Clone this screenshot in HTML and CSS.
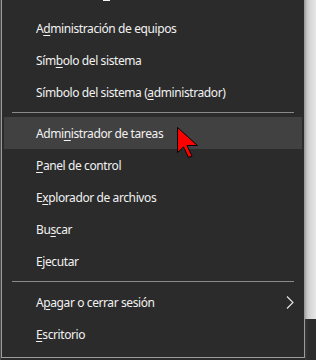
FILE: index.html
```html
<!DOCTYPE html>
<html lang="es">
<head>
<meta charset="utf-8">
<title>Menú Win+X</title>
<link rel="stylesheet" href="styles.css">
</head>
<body>
<div class="screen">
  <div class="gutter"></div>
  <nav class="menu">
    <div class="item stub"><span class="mark"></span></div>
    <div class="item">A<u>d</u>ministración de equipos</div>
    <div class="item">Sím<u>b</u>olo del sistema</div>
    <div class="item">Símbolo del sistema (<u>a</u>dministrador)</div>
    <div class="sep"></div>
    <div class="item active">Admi<u>n</u>istrador de tareas</div>
    <div class="item"><u>P</u>anel de control</div>
    <div class="item">E<u>x</u>plorador de archivos</div>
    <div class="item">Bu<u>s</u>car</div>
    <div class="item">E<u>j</u>ecutar</div>
    <div class="sep"></div>
    <div class="item">A<u>p</u>agar o cerrar sesión
      <svg class="chev" width="8" height="13" viewBox="0 0 8 13"><polyline points="1,0.5 7,6.5 1,12.5" fill="none" stroke="#e8e8e8" stroke-width="1.1"/></svg>
    </div>
    <div class="item"><u>E</u>scritorio</div>
  </nav>
  <div class="edge">
    <div class="edge-top"></div>
    <div class="edge-bottom"></div>
  </div>
</div>
<svg class="cursor" width="24" height="34" viewBox="0 0 24 34">
  <polygon points="0.5,0.5 0.5,25.5 6.5,20 11.5,30.5 15,29 10,18.5 20.5,18.5" fill="#ff0000" stroke="#000" stroke-width="1" stroke-linejoin="miter"/>
</svg>
</body>
</html>
```
FILE: styles.css
```css
html, body {
  margin: 0;
  padding: 0;
}
body {
  width: 316px;
  height: 360px;
  overflow: hidden;
  background: #2b2b2b;
  position: relative;
  font-family: "Noto Sans", "Segoe UI", sans-serif;
  font-size: 12px;
  letter-spacing: -0.4px;
}
.screen {
  display: flex;
  height: 360px;
}
.gutter {
  width: 1px;
  background: #4a4a4a;
}
.menu {
  flex: none;
  width: 304px;
  height: 379px;
  margin-top: -21px;
  border: 1px solid #9c9c9c;
  background: #2b2b2b;
  padding: 0 2px 8px;
  box-sizing: border-box;
  display: flex;
  flex-direction: column;
}
.item {
  height: 32px;
  flex: none;
  display: flex;
  align-items: center;
  padding: 0 8px 0 32px;
  color: #f2f2f2;
  white-space: nowrap;
}
.item u {
  text-decoration-thickness: 1px;
  text-underline-offset: 2px;
}
.item.active {
  background: #414141;
}
.stub {
  align-items: flex-start;
}
.mark {
  display: block;
  width: 7px;
  height: 1px;
  margin: 20px 0 0 67px;
  background: #f2f2f2;
}
.chev {
  margin-left: auto;
}
.sep {
  height: 1px;
  margin: 4px 8px 4px 8px;
  background: #8a8a8a;
  flex: none;
}
.edge {
  flex: 1;
  display: flex;
  flex-direction: column;
}
.edge-top {
  height: 319px;
  background: linear-gradient(to right, #a4a4a4 0, #c6c6c6 2px, #d2d2d2 4px, #dcdcdc 7px, #e6e6e6 11px);
}
.edge-bottom {
  flex: 1;
  background: linear-gradient(to right, #3a3a3a 0, #2d2d2d 3px, #2b2b2b 11px);
}
.cursor {
  position: absolute;
  left: 177px;
  top: 127px;
}
```
